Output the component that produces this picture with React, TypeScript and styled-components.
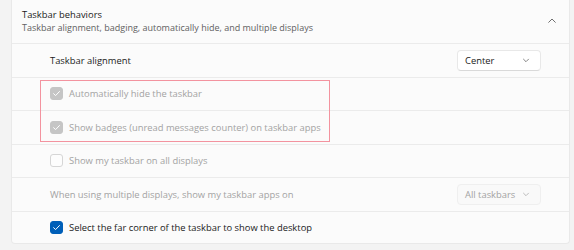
import React from 'react';
import styled, { createGlobalStyle } from 'styled-components';

const GlobalStyle = createGlobalStyle`
	html, body {
		margin: 0;
		padding: 0;
		background: #f3f3f3;
	}
	body {
		font-family: 'Open Sans', 'Noto Sans', sans-serif;
		color: #1b1b1b;
		-webkit-font-smoothing: antialiased;
	}
`;

const Page = styled.div`
	width: 574px;
	height: 250px;
	padding: 0 4px 0 11px;
	box-sizing: border-box;
	overflow: hidden;
`;

const Panel = styled.section`
	position: relative;
	background: #fbfbfb;
	border: 1px solid #e9e9e9;
	border-top: none;
	border-radius: 0 0 4px 4px;
`;

const Header = styled.header`
	height: 43px;
	box-sizing: border-box;
	display: flex;
	align-items: center;
	justify-content: space-between;
	padding: 0 13px 2px 10px;
`;

const HeaderText = styled.div`
	display: flex;
	flex-direction: column;
	gap: 1px;
`;

const Title = styled.span`
	font-size: 9.4px;
	line-height: 13px;
	color: #1b1b1b;
`;

const Subtitle = styled.span`
	font-size: 9px;
	line-height: 12px;
	color: #616161;
`;

const Row = styled.div<{ $last?: boolean }>`
	height: ${(p) => (p.$last ? '32px' : '33.5px')};
	box-sizing: border-box;
	border-top: 1px solid #ebebeb;
	display: flex;
	align-items: center;
	justify-content: space-between;
	padding: 0 28px 0 38px;
`;

const Label = styled.span<{ $disabled?: boolean }>`
	font-size: 9.4px;
	color: ${(p) => (p.$disabled ? '#a3a3a3' : '#1b1b1b')};
`;

const CheckLine = styled.label`
	display: flex;
	align-items: center;
	gap: 6px;
`;

const Box = styled.span<{ $state: 'on' | 'dim' | 'off' }>`
	width: 13px;
	height: 13px;
	box-sizing: border-box;
	border-radius: 3px;
	display: flex;
	align-items: center;
	justify-content: center;
	background: ${(p) =>
		p.$state === 'on' ? '#005fb8' : p.$state === 'dim' ? '#c5c5c5' : '#fdfdfd'};
	border: 1px solid
		${(p) => (p.$state === 'on' ? '#005fb8' : p.$state === 'dim' ? '#c5c5c5' : '#d6d6d6')};
`;

const Select = styled.div<{ $disabled?: boolean }>`
	width: 84px;
	height: 21px;
	box-sizing: border-box;
	display: flex;
	align-items: center;
	justify-content: space-between;
	padding: 0 10px 0 7px;
	border-radius: 4px;
	background: ${(p) => (p.$disabled ? '#f9f9f9' : '#ffffff')};
	border: 1px solid ${(p) => (p.$disabled ? '#efefef' : '#e8e8e8')};
	border-bottom-color: ${(p) => (p.$disabled ? '#efefef' : '#d9d9d9')};
	font-size: 9.4px;
	color: ${(p) => (p.$disabled ? '#a3a3a3' : '#1b1b1b')};
`;

const Highlight = styled.div`
	position: absolute;
	left: 28px;
	top: 80px;
	width: 290px;
	height: 62px;
	box-sizing: border-box;
	border: 1.5px solid #f3939f;
	pointer-events: none;
`;

function Check({ state }: { state: 'on' | 'dim' | 'off' }) {
	return (
		<Box $state={state}>
			{state !== 'off' && (
				<svg width="9" height="9" viewBox="0 0 10 10">
					<path d="M1.8 5.2 L4 7.3 L8.3 2.8" fill="none" stroke="#fff" strokeWidth="1.1" strokeLinecap="round" strokeLinejoin="round" />
				</svg>
			)}
		</Box>
	);
}

function Chevron({ up, color }: { up?: boolean; color: string }) {
	return (
		<svg width="8" height="5" viewBox="0 0 8 5">
			<path
				d={up ? 'M0.7 4.3 L4 1 L7.3 4.3' : 'M1.5 1.2 L4 3.7 L6.5 1.2'}
				fill="none"
				stroke={color}
				strokeWidth="0.9"
				strokeLinecap="round"
				strokeLinejoin="round"
			/>
		</svg>
	);
}

export default function App() {
	return (
		<>
			<GlobalStyle />
			<Page>
				<Panel>
					<Header>
						<HeaderText>
							<Title>Taskbar behaviors</Title>
							<Subtitle>Taskbar alignment, badging, automatically hide, and multiple displays</Subtitle>
						</HeaderText>
						<Chevron up color="#5f5f5f" />
					</Header>
					<Row>
						<Label>Taskbar alignment</Label>
						<Select>
							<span>Center</span>
							<Chevron color="#777" />
						</Select>
					</Row>
					<Row>
						<CheckLine>
							<Check state="dim" />
							<Label $disabled>Automatically hide the taskbar</Label>
						</CheckLine>
					</Row>
					<Row>
						<CheckLine>
							<Check state="dim" />
							<Label $disabled>Show badges (unread messages counter) on taskbar apps</Label>
						</CheckLine>
					</Row>
					<Row>
						<CheckLine>
							<Check state="off" />
							<Label $disabled>Show my taskbar on all displays</Label>
						</CheckLine>
					</Row>
					<Row>
						<Label $disabled>When using multiple displays, show my taskbar apps on</Label>
						<Select $disabled>
							<span>All taskbars</span>
							<Chevron color="#b5b5b5" />
						</Select>
					</Row>
					<Row $last>
						<CheckLine>
							<Check state="on" />
							<Label>Select the far corner of the taskbar to show the desktop</Label>
						</CheckLine>
					</Row>
					<Highlight />
				</Panel>
			</Page>
		</>
	);
}
